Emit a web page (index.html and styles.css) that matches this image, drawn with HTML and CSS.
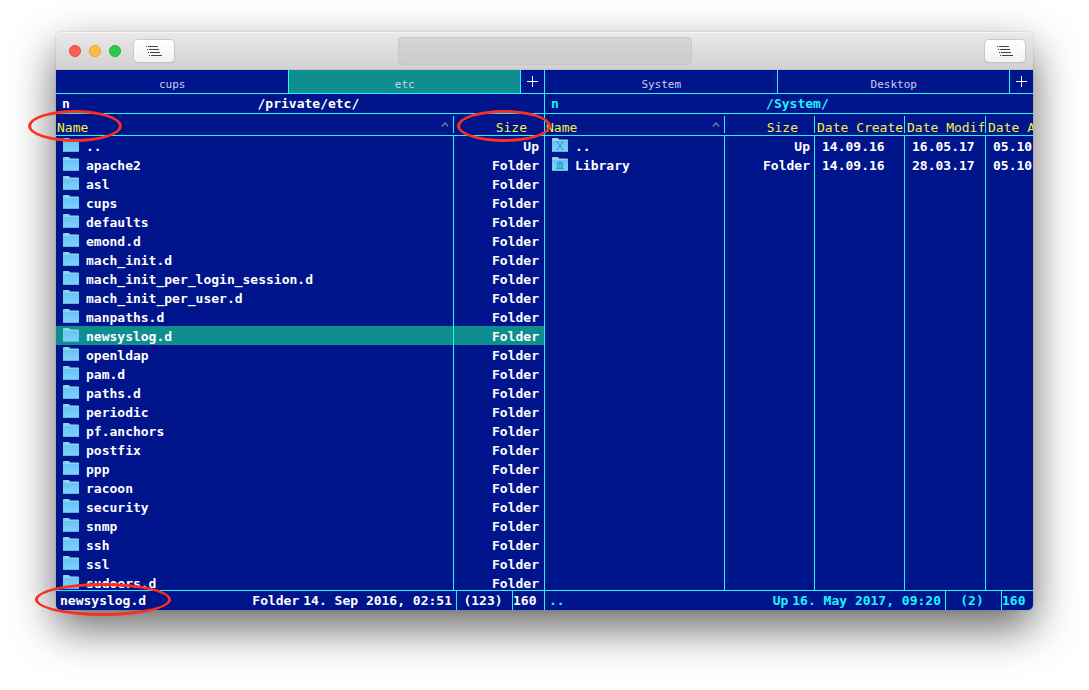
FILE: index.html
```
<!DOCTYPE html>
<html lang="en">
<head>
<meta charset="utf-8">
<title>File manager</title>
<link rel="stylesheet" href="styles.css">
</head>
<body>
<svg class="defs" aria-hidden="true">
  <defs>
    <linearGradient id="folder-fill" x1="0" y1="0" x2="0" y2="1">
      <stop offset="0" stop-color="#66c4f4"/>
      <stop offset="1" stop-color="#80d2fa"/>
    </linearGradient>
    <symbol id="folder" viewBox="0 0 16 14">
      <path d="M0 14V1Q0 0 1 0H5.500Q6.200 0 6.800 1L7.200 1.500H15Q16 1.500 16 2.500V14Z" fill="#8fd3ee"/>
      <path d="M0 3H16V14H0Z" fill="url(#folder-fill)"/>
      <path d="M0 13.500H16" stroke="#5fb4dc"/>
    </symbol>
    <symbol id="folder-x" viewBox="0 0 16 14">
      <use href="#folder"/>
      <path d="M5.500 4L10.500 11.500M10.500 4L5.500 11.500M4.500 4H6.500M9.500 4H11.500M4.500 11.500H6.500M9.500 11.500H11.500" stroke="#2f93d4" fill="none"/>
    </symbol>
    <symbol id="folder-library" viewBox="0 0 16 14">
      <use href="#folder"/>
      <path d="M4 6.500L8 4L12 6.500ZM4 11H12V12H4Z" fill="#2f93d4"/>
      <path d="M5.500 6.500V11M7.300 6.500V11M8.900 6.500V11M10.500 6.500V11" stroke="#2f93d4" stroke-width=".9"/>
    </symbol>
    <symbol id="list" viewBox="0 0 18 12">
      <path d="M1 1.500H2M3 1.500H13M2 4.500H3M4 4.500H14M3 7.500H4M5 7.500H15M4 10.500H5M6 10.500H17" stroke="#444" fill="none"/>
    </symbol>
    <symbol id="plus" viewBox="0 0 11 11">
      <path d="M0 5.500H11M5.500 0V11" stroke="#fff" fill="none"/>
    </symbol>
    <symbol id="sort" viewBox="0 0 8 5">
      <path d="M.8 4.500L4 1L7.200 4.500" stroke="#7f7f96" stroke-width="1.200" fill="none"/>
    </symbol>
  </defs>
</svg>
<main class="window">
  <header class="titlebar">
    <div class="title-left">
      <div class="lights">
        <button class="light close" aria-label="Close"></button>
        <button class="light minimise" aria-label="Minimise"></button>
        <button class="light maximise" aria-label="Zoom"></button>
      </div>
      <button class="tool" aria-label="Left view mode"><svg class="list-icon"><use href="#list"/></svg></button>
    </div>
    <div class="progress"></div>
    <div class="title-right">
      <button class="tool" aria-label="Right view mode"><svg class="list-icon"><use href="#list"/></svg></button>
    </div>
  </header>
  <div class="panels">
    <section class="panel left">
      <nav class="tabs">
        <button class="tab">cups</button>
        <button class="tab current">etc</button>
        <button class="add" aria-label="New tab"><svg class="plus-icon"><use href="#plus"/></svg></button>
      </nav>
      <div class="path"><span>n</span><span class="folder-path">/private/etc/</span></div>
      <div class="listing">
        <table>
          <colgroup><col><col class="col-size"></colgroup>
          <thead><tr>
            <th class="name">Name<svg class="sort-icon"><use href="#sort"/></svg></th>
            <th class="size">Size</th>
          </tr></thead>
          <tbody>
            <tr><td class="name"><svg class="icon"><use href="#folder"/></svg>..</td><td class="size">Up</td></tr>
            <tr><td class="name"><svg class="icon"><use href="#folder"/></svg>apache2</td><td class="size">Folder</td></tr>
            <tr><td class="name"><svg class="icon"><use href="#folder"/></svg>asl</td><td class="size">Folder</td></tr>
            <tr><td class="name"><svg class="icon"><use href="#folder"/></svg>cups</td><td class="size">Folder</td></tr>
            <tr><td class="name"><svg class="icon"><use href="#folder"/></svg>defaults</td><td class="size">Folder</td></tr>
            <tr><td class="name"><svg class="icon"><use href="#folder"/></svg>emond.d</td><td class="size">Folder</td></tr>
            <tr><td class="name"><svg class="icon"><use href="#folder"/></svg>mach_init.d</td><td class="size">Folder</td></tr>
            <tr><td class="name"><svg class="icon"><use href="#folder"/></svg>mach_init_per_login_session.d</td><td class="size">Folder</td></tr>
            <tr><td class="name"><svg class="icon"><use href="#folder"/></svg>mach_init_per_user.d</td><td class="size">Folder</td></tr>
            <tr><td class="name"><svg class="icon"><use href="#folder"/></svg>manpaths.d</td><td class="size">Folder</td></tr>
            <tr class="selected"><td class="name"><svg class="icon"><use href="#folder"/></svg>newsyslog.d</td><td class="size">Folder</td></tr>
            <tr><td class="name"><svg class="icon"><use href="#folder"/></svg>openldap</td><td class="size">Folder</td></tr>
            <tr><td class="name"><svg class="icon"><use href="#folder"/></svg>pam.d</td><td class="size">Folder</td></tr>
            <tr><td class="name"><svg class="icon"><use href="#folder"/></svg>paths.d</td><td class="size">Folder</td></tr>
            <tr><td class="name"><svg class="icon"><use href="#folder"/></svg>periodic</td><td class="size">Folder</td></tr>
            <tr><td class="name"><svg class="icon"><use href="#folder"/></svg>pf.anchors</td><td class="size">Folder</td></tr>
            <tr><td class="name"><svg class="icon"><use href="#folder"/></svg>postfix</td><td class="size">Folder</td></tr>
            <tr><td class="name"><svg class="icon"><use href="#folder"/></svg>ppp</td><td class="size">Folder</td></tr>
            <tr><td class="name"><svg class="icon"><use href="#folder"/></svg>racoon</td><td class="size">Folder</td></tr>
            <tr><td class="name"><svg class="icon"><use href="#folder"/></svg>security</td><td class="size">Folder</td></tr>
            <tr><td class="name"><svg class="icon"><use href="#folder"/></svg>snmp</td><td class="size">Folder</td></tr>
            <tr><td class="name"><svg class="icon"><use href="#folder"/></svg>ssh</td><td class="size">Folder</td></tr>
            <tr><td class="name"><svg class="icon"><use href="#folder"/></svg>ssl</td><td class="size">Folder</td></tr>
            <tr><td class="name"><svg class="icon"><use href="#folder"/></svg>sudoers.d</td><td class="size">Folder</td></tr>
          </tbody>
        </table>
      </div>
      <footer class="status">
        <span class="file">newsyslog.d</span><span>Folder</span><span class="date">14. Sep 2016, 02:51</span><span class="count">(123)</span><span class="free">160</span>
      </footer>
      <span class="ring ring-name"></span>
      <span class="ring ring-size"></span>
      <span class="ring ring-file"></span>
    </section>
    <section class="panel right">
      <nav class="tabs">
        <button class="tab">System</button>
        <button class="tab">Desktop</button>
        <button class="add" aria-label="New tab"><svg class="plus-icon"><use href="#plus"/></svg></button>
      </nav>
      <div class="path"><span>n</span><span class="folder-path">/System/</span></div>
      <div class="listing">
        <table>
          <colgroup><col><col class="col-size"><col class="col-created"><col class="col-modified"><col class="col-added"></colgroup>
          <thead><tr>
            <th class="name">Name<svg class="sort-icon"><use href="#sort"/></svg></th>
            <th class="size">Size</th>
            <th>Date Create</th>
            <th>Date Modif</th>
            <th>Date A</th>
          </tr></thead>
          <tbody>
            <tr><td class="name"><svg class="icon"><use href="#folder-x"/></svg>..</td><td class="size">Up</td><td>14.09.16</td><td>16.05.17</td><td>05.10</td></tr>
            <tr><td class="name"><svg class="icon"><use href="#folder-library"/></svg>Library</td><td class="size">Folder</td><td>14.09.16</td><td>28.03.17</td><td>05.10</td></tr>
            <tr class="filler"><td class="name"></td><td></td><td></td><td></td><td></td></tr>
          </tbody>
        </table>
      </div>
      <footer class="status">
        <span class="file">..</span><span>Up</span><span class="date">16. May 2017, 09:20</span><span class="count">(2)</span><span class="free">160</span>
      </footer>
    </section>
  </div>
</main>
</body>
</html>
```
FILE: styles.css
```
:root {
  --navy: #00148c;
  --cyan: #1ef5ff;
  --teal: #0f8e90;
  --yellow: #f4f440;
}

* {
  box-sizing: border-box;
}

body {
  display: flex;
  flex-direction: column;
  height: 100vh;
  margin: 0;
  padding: 32px 56px 80px;
  background: #fff;
  color: #fff;
  font: bold 13px/19px "DejaVu Sans Mono", Menlo, monospace;
  overflow: hidden;
}

button {
  margin: 0;
  padding: 0;
  border: 0;
  font: inherit;
  color: inherit;
}

.defs {
  position: absolute;
  width: 0;
  height: 0;
}

.window {
  display: flex;
  flex: 1;
  flex-direction: column;
  min-height: 0;
  border-radius: 5px;
  box-shadow: 0 0 1px rgba(0, 0, 0, .5), 0 18px 44px rgba(0, 0, 0, .6);
}

.titlebar {
  display: grid;
  grid-template-columns: 1fr 294px 1fr;
  align-items: center;
  height: 38px;
  padding: 0 8px;
  border-bottom: 1px solid #c4c2c4;
  border-radius: 5px 5px 0 0;
  background: linear-gradient(#ebe9eb, #d2d0d2);
  box-shadow: inset 0 1px #f6f5f6;
}

.title-left {
  display: flex;
  align-items: center;
  gap: 13px;
  padding-left: 5px;
}

.title-right {
  display: flex;
  justify-content: flex-end;
}

.lights {
  display: flex;
  gap: 8px;
}

.light {
  width: 12px;
  height: 12px;
  border: 1px solid;
  border-radius: 50%;
}

.close {
  background: #fd5c56;
  border-color: #e2473f;
}

.minimise {
  background: #fdbd3f;
  border-color: #dfa033;
}

.maximise {
  background: #2dc944;
  border-color: #24ac34;
}

.tool {
  display: grid;
  place-items: center;
  width: 40px;
  height: 22px;
  border-radius: 4px;
  background: linear-gradient(#fff, #f2f2f2);
  box-shadow: 0 0 1px 1px #c9c7c9, 0 1px 1px #a9a9a9;
}

.list-icon {
  width: 18px;
  height: 12px;
}

.progress {
  height: 28px;
  border: 1px solid #c9c7c9;
  border-radius: 4px;
  background: linear-gradient(#d6d5d6, #cccacc);
}

.panels {
  display: grid;
  flex: 1;
  grid-template-columns: 1fr 1fr;
  gap: 1px;
  min-height: 0;
  border-radius: 0 0 5px 5px;
  background: var(--cyan);
}

.panel {
  position: relative;
  display: flex;
  flex-direction: column;
  min-width: 0;
  min-height: 0;
  background: var(--navy);
}

.left {
  border-bottom-left-radius: 5px;
}

.right {
  border-bottom-right-radius: 5px;
}

.tabs {
  display: flex;
  height: 24px;
  border-bottom: 1px solid var(--cyan);
}

.tab {
  flex: 1;
  padding: 5px 0 0 1px;
  border-right: 1px solid var(--cyan);
  background: none;
  color: #ccd0e8;
  font-size: 11px;
  font-weight: normal;
}

.current {
  background: var(--teal);
}

.add {
  display: grid;
  place-items: center;
  width: 23px;
  background: none;
}

.plus-icon {
  width: 11px;
  height: 11px;
}

.path {
  display: flex;
  gap: 3px;
  height: 20px;
  padding-left: 6px;
  border-bottom: 1px solid var(--cyan);
}

.folder-path {
  flex: 1;
  text-align: center;
}

.right .path,
.right .status {
  color: var(--cyan);
}

.listing {
  flex: 1;
  min-height: 0;
  overflow: hidden;
}

table {
  width: 100%;
  height: 100%;
  border-spacing: 0;
  table-layout: fixed;
}

.col-size {
  width: 90px;
}

.left .col-size {
  width: 91px;
}

.col-created {
  width: 90px;
}

.col-modified {
  width: 81px;
}

.col-added {
  width: 48px;
}

th,
td {
  height: 19px;
  padding: 2px 0 0 7px;
  border-left: 1px solid var(--cyan);
  overflow: hidden;
  line-height: 17px;
  text-align: left;
  white-space: nowrap;
}

th {
  height: 22px;
  padding: 6px 0 0 3px;
  border-bottom: 1px solid var(--cyan);
  border-left: 0;
  background: linear-gradient(var(--cyan), var(--cyan)) 0 2px / 1px 17px no-repeat;
  color: var(--yellow);
  font-weight: normal;
  line-height: 15px;
}

th.name {
  padding-left: 1px;
  background: none;
}

td.name {
  border-left: 0;
}

td.size {
  padding-right: 5px;
  text-align: right;
}

.right td.size {
  padding-right: 4px;
}

th.size {
  padding-right: 17px;
  text-align: right;
}

.right th.size {
  padding-right: 16px;
}

.icon {
  display: inline-block;
  width: 16px;
  height: 14px;
  margin-right: 7px;
  vertical-align: -1px;
}

.sort-icon {
  float: right;
  width: 8px;
  height: 5px;
  margin: 2px 4px 0 0;
}

.selected {
  background: var(--teal);
}

.filler td {
  height: auto;
}

.status {
  display: flex;
  height: 20px;
  border-top: 1px solid var(--cyan);
  white-space: nowrap;
}

.file {
  flex: 1;
  padding-left: 4px;
}

.date {
  padding: 0 4px;
}

.count {
  width: 56px;
  padding-right: 3px;
  border-left: 1px solid var(--cyan);
  text-align: center;
}

.free {
  width: 32px;
  border-left: 1px solid var(--cyan);
}

/* Callout rings drawn over the window */
.ring {
  position: absolute;
  border: 3px solid #fb2f20;
  border-radius: 50%;
  pointer-events: none;
  z-index: 1;
}

.ring-name {
  top: 40px;
  left: -28px;
  width: 94px;
  height: 32px;
}

.ring-size {
  top: 40px;
  right: -7px;
  width: 94px;
  height: 32px;
}

.ring-file {
  bottom: -6px;
  left: -21px;
  width: 136px;
  height: 33px;
}
```
